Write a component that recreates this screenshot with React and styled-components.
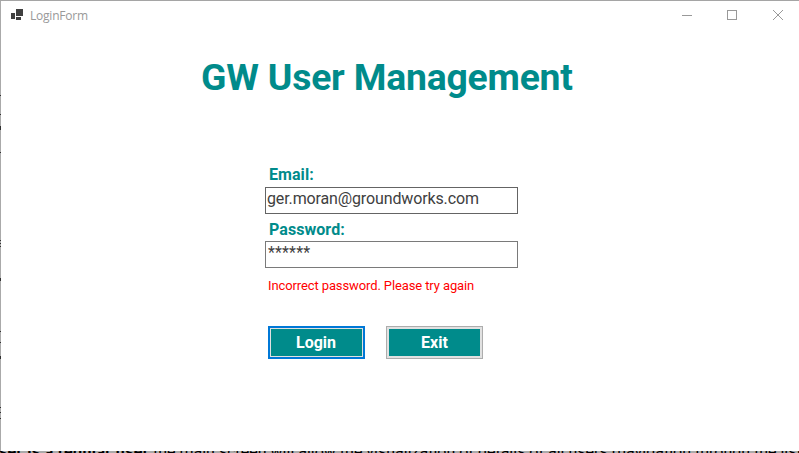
import React from "react";
import styled, { createGlobalStyle } from "styled-components";

const GlobalStyle = createGlobalStyle`
  * { box-sizing: border-box; }
  body { margin: 0; background: #aaa; font-family: Roboto, sans-serif; overflow: hidden; }
`;

const Desktop = styled.div`
  width: 799px;
  height: 453px;
  display: flex;
  flex-direction: column;
  overflow: hidden;
  background: #aaa;
`;

const Frame = styled.div`
  height: 451px;
  display: grid;
  grid-template-columns: 1px 1fr;
  border-top: 1px solid #a5a5a5;
`;

const marks = [95, 114, 126, 127, 128, 129, 152, 240, 243, 246, 278, 279, 280, 331, 342, 356, 357, 358, 407, 412, 418];

const EdgeStrip = styled.div`
  background: ${(p) => `${p.$marks
    .map((y) => `linear-gradient(#303030, #303030) 0 ${y - 1}px / 1px 1px no-repeat`)
    .join(", ")}, #aaa`};
`;

const Window = styled.main`
  background: #fff;
  display: flex;
  flex-direction: column;
`;

const TitleBar = styled.header`
  height: 30px;
  display: flex;
  align-items: flex-start;
  padding-left: 10px;
`;

const AppIcon = styled.svg`
  width: 12px;
  height: 11px;
  margin-top: 8px;
`;

const Caption = styled.span`
  flex: 1;
  margin: 7px 0 0 7px;
  font: 12px/16px "Open Sans", sans-serif;
  letter-spacing: -0.22px;
  color: #999;
`;

const WindowControl = styled.svg`
  width: 46px;
  height: 30px;
  fill: none;
  stroke: #999;
  flex: none;
`;

const Heading = styled.h1`
  margin: 22px 0 0 200px;
  font-size: 37.33px;
  line-height: 48px;
  font-weight: 700;
  letter-spacing: -0.2px;
  color: #008b8b;
  white-space: nowrap;
`;

const Form = styled.form`
  width: 253px;
  margin: 64px 0 0 264px;
  display: flex;
  flex-direction: column;
`;

const Label = styled.label`
  height: ${(p) => p.$height};
  margin: ${(p) => p.$gap || "0"} 0 0 4px;
  font-size: 16px;
  line-height: 20px;
  font-weight: 700;
  letter-spacing: 0.06px;
  color: #008b8b;
`;

const Field = styled.input`
  height: 27px;
  border: 1px solid ${(p) => p.$edge};
  border-radius: 0;
  outline: 0;
  background: #fff;
  padding: 0 1px 4px;
  font: 16px/20px Roboto, sans-serif;
  letter-spacing: ${(p) => p.$tracking};
  text-indent: ${(p) => p.$indent || "0"};
  color: #404040;
`;

const ErrorText = styled.p`
  margin: 9px 0 0 3px;
  font-size: 13px;
  line-height: 18px;
  letter-spacing: -0.11px;
  color: #f00;
  white-space: nowrap;
`;

const Actions = styled.div`
  display: flex;
  gap: 21px;
  margin: 31px 0 0 3px;
`;

const Button = styled.button`
  width: 97px;
  height: 33px;
  padding: 0 ${(p) => (p.$focused ? "1px" : "0")} 0 0;
  border: ${(p) => (p.$focused ? "2px solid #0078d7" : "1px solid #adadad")};
  border-radius: 0;
  box-shadow: inset 0 0 0 ${(p) => (p.$focused ? "1px" : "2px")} #e1e1e1;
  background: #008b8b;
  color: #fff;
  font: 700 16px/20px Roboto, sans-serif;
`;

const Backdrop = styled.div`
  height: 2px;
  overflow: hidden;
  background: #aaa;
`;

const DocumentLine = styled.p`
  margin: -9px 0 0 -1px;
  font-size: 16px;
  line-height: 20px;
  color: #000;
  white-space: nowrap;
`;

const Strong = styled.strong`
  letter-spacing: 0.36px;
`;

export default function App() {
  return (
    <>
      <GlobalStyle />
      <Desktop>
        <Frame>
          <EdgeStrip $marks={marks} />
          <Window>
            <TitleBar>
              <AppIcon viewBox="0 0 12 11" fill="#404040" shapeRendering="crispEdges">
                <path d="M0 4h4v6H0zM5 0h7v7H5zM5 8h5v3H5z" />
              </AppIcon>
              <Caption>LoginForm</Caption>
              <WindowControl viewBox="0 0 46 30" shapeRendering="crispEdges">
                <path d="M21 14.5h10" />
              </WindowControl>
              <WindowControl viewBox="0 0 46 30" shapeRendering="crispEdges">
                <path d="M20.5 9.5h9v9h-9z" />
              </WindowControl>
              <WindowControl viewBox="0 0 46 30">
                <path d="M20 9l10 10M30 9L20 19" />
              </WindowControl>
            </TitleBar>
            <Heading>GW User Management</Heading>
            <Form onSubmit={(e) => e.preventDefault()}>
              <Label htmlFor="email" $height="22px">Email:</Label>
              <Field id="email" $edge="#646464" $tracking="-0.13px" defaultValue="ger.moran@groundworks.com" />
              <Label htmlFor="password" $gap="6px" $height="21px">Password:</Label>
              <Field id="password" $edge="#7a7a7a" $tracking="0.15px" $indent="1px" defaultValue="******" />
              <ErrorText>Incorrect password. Please try again</ErrorText>
              <Actions>
                <Button type="submit" $focused>Login</Button>
                <Button type="button">Exit</Button>
              </Actions>
            </Form>
          </Window>
        </Frame>
        <Backdrop>
          <DocumentLine>
            <Strong>ser is a regular user</Strong> the main screen will allow the visualization of details of all users (navigation through the list
          </DocumentLine>
        </Backdrop>
      </Desktop>
    </>
  );
}
